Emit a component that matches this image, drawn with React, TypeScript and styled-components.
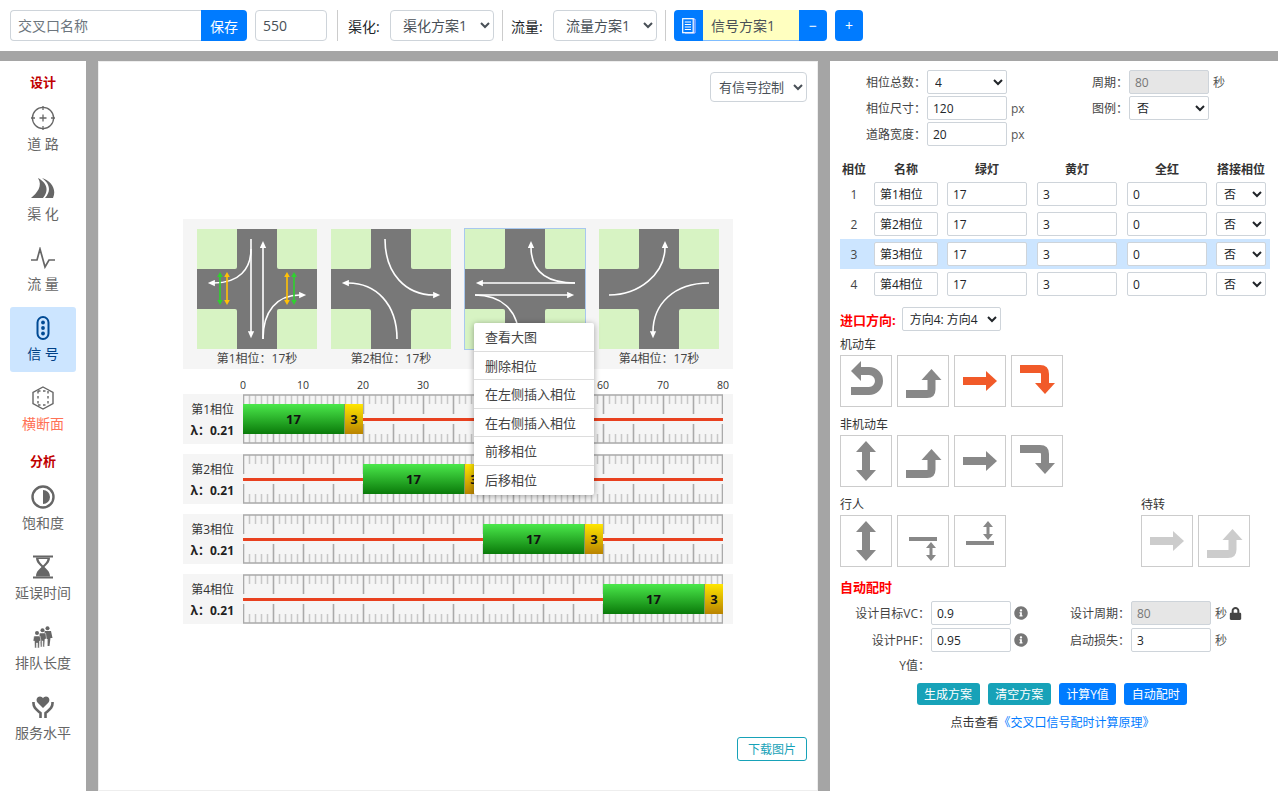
import React from "react";
import styled, { createGlobalStyle } from "styled-components";
import { FaInfoCircle, FaLock } from "react-icons/fa";

const GlobalStyle = createGlobalStyle`
    html, body {
        margin: 0;
        padding: 0;
        height: 100%;
        overflow: hidden;
    }
    * {
        box-sizing: border-box;
    }
    body {
        font-family: "Open Sans", "Noto Sans CJK SC", sans-serif;
        font-size: 14px;
        color: #212529;
    }
`;

const Page = styled.div`
    width: 1278px;
    height: 791px;
    display: flex;
    flex-direction: column;
    background: #a5a5a5;
    overflow: hidden;
`;

/* ---------- toolbar ---------- */

const Toolbar = styled.header`
    height: 51px;
    flex: none;
    background: #fff;
    display: flex;
    align-items: center;
    gap: 8px;
    padding: 0 10px;
`;

const Group = styled.div`
    display: flex;
    height: 31px;
`;

const TextInput = styled.input<{ $w: number }>`
    width: ${(p) => p.$w}px;
    height: 31px;
    border: 1px solid #ced4da;
    border-radius: 4px;
    padding: 0 7px;
    font: inherit;
    color: #495057;
    background: #fff;
    outline: none;

    &::placeholder {
        color: #6c757d;
    }
`;

const GroupedInput = styled(TextInput)`
    border-radius: 4px 0 0 4px;
    border-right: none;
`;

const PrimaryButton = styled.button<{ $w: number; $right?: boolean }>`
    width: ${(p) => p.$w}px;
    height: 31px;
    border: none;
    padding: 0;
    background: #007bff;
    color: #fff;
    font: inherit;
    border-radius: ${(p) => (p.$right ? "0 4px 4px 0" : "4px")};
    display: flex;
    align-items: center;
    justify-content: center;
`;

const PlanIcon = styled.div`
    width: 29px;
    height: 31px;
    background: #007bff;
    border-radius: 4px 0 0 4px;
    display: flex;
    align-items: center;
    justify-content: center;
`;

const PlanInput = styled.input`
    width: 96px;
    height: 31px;
    border: 1px solid #80bdff;
    border-width: 0 0 1px;
    background: #ffffc0;
    color: #495057;
    font: inherit;
    padding: 0 8px;
    outline: none;
`;

const Divider = styled.div<{ $wide?: boolean }>`
    width: 1px;
    height: 31px;
    background: #ccc;
    margin: 0 ${(p) => (p.$wide ? 2 : 0)}px;
`;

const ToolLabel = styled.label`
    width: 34px;
    white-space: nowrap;
    color: #212529;
`;

const ToolSelect = styled.select`
    width: 104px;
    height: 31px;
    border: 1px solid #ced4da;
    border-radius: 4px;
    background: #fff;
    color: #495057;
    font: inherit;
    padding: 0 8px;
`;

/* ---------- layout ---------- */

const Workspace = styled.div`
    flex: 1;
    min-height: 0;
    display: flex;
    gap: 12px;
    margin-top: 10px;
`;

/* ---------- sidebar ---------- */

const Sidebar = styled.nav`
    width: 86px;
    flex: none;
    background: #fff;
    padding: 11px 10px 0;
`;

const SideTitle = styled.div<{ $gap?: boolean }>`
    height: 20px;
    line-height: 20px;
    margin: ${(p) => (p.$gap ? 9 : 0)}px 0 5px;
    text-align: center;
    font-size: 13px;
    font-weight: 700;
    color: #c00000;
`;

const SideItem = styled.div<{ $active?: boolean; $accent?: boolean }>`
    width: 66px;
    height: 65px;
    margin-bottom: 5px;
    border-radius: 3px;
    display: flex;
    flex-direction: column;
    align-items: center;
    background: ${(p) => (p.$active ? "#cce5ff" : "transparent")};
    color: ${(p) => (p.$active ? "#004085" : p.$accent ? "#ff7256" : "#666")};
`;

const SideIcon = styled.div`
    height: 24px;
    margin-top: 9px;
    display: flex;
    align-items: center;
    justify-content: center;
    color: #666;
`;

const ActiveIcon = styled(SideIcon)`
    color: #004a94;
`;

const SideText = styled.div`
    height: 20px;
    line-height: 20px;
    margin-top: 4px;
    white-space: pre;
    font-size: 14px;
`;

/* ---------- main canvas ---------- */

const Main = styled.main`
    width: 720px;
    flex: none;
    background: #fff;
    border: 1px solid #eee;
    padding: 10px 10px 29px;
    display: flex;
    flex-direction: column;
`;

const MainTop = styled.div`
    display: flex;
    justify-content: flex-end;
`;

const ModeSelect = styled.select`
    width: 97px;
    height: 30px;
    border: 1px solid #ced4da;
    border-radius: 4px;
    background: #fff;
    color: #495057;
    font: inherit;
    font-size: 13px;
    padding: 0 4px;
`;

const Stage = styled.div`
    position: relative;
    width: 550px;
    margin: 117px auto 0;
`;

const PhaseStrip = styled.div`
    height: 150px;
    background: #f5f5f5;
    padding: 10px 14px 0;
    display: flex;
    gap: 14px;
`;

const PhaseCell = styled.div`
    width: 120px;
`;

const PhaseFrame = styled.div<{ $selected?: boolean }>`
    width: 120px;
    height: 120px;
    outline: ${(p) => (p.$selected ? "1px solid #a8c8ee" : "none")};

    svg {
        display: block;
    }
`;

const PhaseCaption = styled.div`
    height: 20px;
    line-height: 19px;
    text-align: center;
    font-size: 12px;
    color: #444;
    white-space: nowrap;
`;

const Axis = styled.div`
    width: 480px;
    height: 16px;
    margin: 8px 0 1px 60px;
    display: flex;
    justify-content: space-between;
    align-items: center;
`;

const AxisTick = styled.span`
    width: 0;
    display: flex;
    justify-content: center;
    font-size: 10.5px;
    color: #333;
`;

const TimeRow = styled.div`
    width: 550px;
    height: 50px;
    margin-bottom: 10px;
    background: #f5f5f5;
    display: flex;
`;

const TimeLabel = styled.div`
    width: 60px;
    padding: 5px 9px 0 0;
    text-align: right;
    font-size: 12px;
    color: #333;
    line-height: 21px;
`;

const Lambda = styled.div`
    font-weight: 700;
    color: #222;
    white-space: nowrap;
`;

const Track = styled.div`
    position: relative;
    width: 480px;
    height: 50px;

    svg {
        position: absolute;
        left: 0;
        top: 0;
    }
`;

const Segments = styled.div`
    position: relative;
    height: 50px;
    display: flex;
    align-items: center;
`;

const RedSeg = styled.div`
    height: 3px;
    background: #e8411f;
`;

const GreenSeg = styled.div`
    height: 30px;
    background: linear-gradient(#4be84b, #0a7a0a);
    border-right: 1px solid #7d9a62;
    display: flex;
    align-items: center;
    justify-content: center;
    font-size: 13px;
    font-weight: 700;
    color: #111;
`;

const YellowSeg = styled(GreenSeg)`
    background: linear-gradient(#ffe600, #b98300);
    border-right: none;
`;

const DownloadRow = styled.div`
    margin-top: auto;
    display: flex;
    justify-content: flex-end;
`;

const DownloadButton = styled.button`
    width: 70px;
    height: 24px;
    padding: 0;
    background: #fff;
    border: 1px solid #17a2b8;
    border-radius: 3px;
    color: #17a2b8;
    font: inherit;
    font-size: 12px;
`;

const ContextMenu = styled.ul`
    position: absolute;
    left: 291px;
    top: 104px;
    width: 120px;
    margin: 0;
    padding: 0;
    list-style: none;
    background: #fff;
    box-shadow: 0 1px 6px rgba(0, 0, 0, 0.35);
    border-radius: 2px;
`;

const MenuItem = styled.li`
    height: 28.6px;
    line-height: 28px;
    padding-left: 11px;
    font-size: 13px;
    color: #444;
    border-bottom: 1px solid #ddd;

    &:last-child {
        border-bottom: none;
    }
`;

/* ---------- right panel ---------- */

const Panel = styled.aside`
    width: 448px;
    flex: none;
    background: #fff;
    padding: 9px 8px 0 10px;
    font-size: 12px;
    color: #333;
`;

const FormGrid = styled.div<{ $label: number; $mid: number; $rowGap: number; $rows: string }>`
    display: grid;
    margin-left: -10px;
    grid-template-columns: ${(p) => p.$label}px 80px ${(p) => p.$mid}px 80px 1fr;
    grid-template-rows: ${(p) => p.$rows};
    row-gap: ${(p) => p.$rowGap}px;
    align-items: center;
`;

const FormLabel = styled.label`
    text-align: right;
    padding-right: 1px;
    white-space: nowrap;
    color: #444;
`;

const MidCell = styled.div`
    display: flex;
    align-items: center;
    justify-content: space-between;
`;

const FormUnit = styled.span`
    padding-left: 4px;
    color: #555;
    display: flex;
    align-items: center;
    gap: 2px;
`;

const InfoSlot = styled.span`
    padding-left: 3px;
    display: flex;
    color: #777;
    font-size: 14px;
`;

const FieldInput = styled.input<{ $w?: number }>`
    width: ${(p) => p.$w ?? 80}px;
    height: 24px;
    border: 1px solid #ced4da;
    border-radius: 2px;
    padding: 0 5px;
    font: inherit;
    font-size: 12px;
    color: #212529;
    background: #fff;
    outline: none;

    &:disabled {
        background: #e6e6e6;
        color: #777;
    }
`;

const FieldSelect = styled.select<{ $w?: number }>`
    width: ${(p) => p.$w ?? 80}px;
    height: 24px;
    border: 1px solid #ced4da;
    border-radius: 2px;
    padding: 0 3px;
    font: inherit;
    font-size: 12px;
    color: #212529;
    background: #fff;
`;

const TableHead = styled.div`
    display: grid;
    grid-template-columns: 34px 73px 90px 90px 89px 54px;
    height: 21px;
    margin-top: 12px;
    align-items: center;
    font-weight: 700;
    white-space: nowrap;
`;

const HeadCell = styled.div<{ $w: number }>`
    width: ${(p) => p.$w}px;
    text-align: center;
    color: #333;
`;

const TableRow = styled.div<{ $active?: boolean }>`
    display: grid;
    grid-template-columns: 34px 73px 90px 90px 89px 54px;
    width: 430px;
    height: 30px;
    align-items: center;
    background: ${(p) => (p.$active ? "#cce5ff" : "transparent")};
`;

const RowNumber = styled.div`
    width: 28px;
    text-align: center;
    color: #444;
`;

const EntryRow = styled.div`
    display: flex;
    align-items: center;
    gap: 6px;
    margin-top: 8px;
`;

const RedHeading = styled.div`
    font-size: 13px;
    font-weight: 700;
    color: #f00;
    white-space: nowrap;
`;

const GroupLabel = styled.div<{ $top: number }>`
    height: 18px;
    line-height: 20px;
    margin: ${(p) => p.$top}px 0 2px;
`;

const DirRow = styled.div`
    display: flex;
    gap: 5px;
`;

const DirButton = styled.div`
    width: 52px;
    height: 52px;
    border: 1px solid #ccc;
    background: #fff;

    svg {
        display: block;
        margin: -1px;
    }
`;

const SplitRow = styled.div`
    display: flex;
`;

const SplitCol = styled.div<{ $w: number }>`
    width: ${(p) => p.$w}px;
`;

const AutoHeading = styled(RedHeading)`
    height: 20px;
    line-height: 20px;
    margin: 10px 0 4px;
`;

const ActionRow = styled.div`
    display: flex;
    justify-content: center;
    gap: 8px;
    margin: 8px 0 0 -8px;
    padding-left: 2px;
`;

const ActionButton = styled.button<{ $teal?: boolean }>`
    height: 22px;
    padding: 0 7.5px;
    border: none;
    border-radius: 3px;
    background: ${(p) => (p.$teal ? "#17a2b8" : "#007bff")};
    color: #fff;
    font: inherit;
    font-size: 12px;
    white-space: nowrap;
`;

const HelpLine = styled.div`
    height: 20px;
    line-height: 20px;
    margin-top: 8px;
    text-align: center;
    padding-right: 5px;
    color: #333;
`;

const HelpLink = styled.a`
    color: #007bff;
`;

/* ---------- drawings ---------- */

const ROAD = "#787878";
const GRASS = "#d7f3c3";

const LaneHead: React.FC = () => (
    <defs>
        <marker id="lane-head" viewBox="0 0 8 8" refX="1" refY="4" markerWidth="8" markerHeight="7"
                markerUnits="userSpaceOnUse" orient="auto">
            <path d="M0 0.4 L8 4 L0 7.6 Z" fill="#fff"/>
        </marker>
    </defs>
);

const PedArrow: React.FC<{ x: number; color: string }> = ({ x, color }) => (
    <g fill={color}>
        <rect x={x - 0.8} y={45} width={1.6} height={29}/>
        <path d={`M${x} 43 L${x + 2.8} 48 H${x - 2.8} Z`}/>
        <path d={`M${x} 76 L${x + 2.8} 71 H${x - 2.8} Z`}/>
    </g>
);

const PhaseArt: React.FC<{ lanes: string[]; peds?: boolean }> = ({ lanes, peds }) => (
    <svg width="120" height="120" viewBox="0 0 120 120">
        <LaneHead/>
        <rect width="120" height="120" fill={ROAD}/>
        <rect x="-4" y="-4" width="44" height="44" rx="2" fill={GRASS}/>
        <rect x="80" y="-4" width="44" height="44" rx="2" fill={GRASS}/>
        <rect x="-4" y="80" width="44" height="44" rx="2" fill={GRASS}/>
        <rect x="80" y="80" width="44" height="44" rx="2" fill={GRASS}/>
        {lanes.map((d) => (
            <path key={d} d={d} fill="none" stroke="#fff" strokeWidth="1.6" markerEnd="url(#lane-head)"/>
        ))}
        {peds && (
            <>
                <PedArrow x={23} color="#2fd12f"/>
                <PedArrow x={30} color="#ffc107"/>
                <PedArrow x={90} color="#ffc107"/>
                <PedArrow x={97} color="#2fd12f"/>
            </>
        )}
    </svg>
);

const Ruler: React.FC = () => {
    const ticks = [];
    for (let i = 0; i <= 80; i++) {
        const x = Math.min(i * 6 + 0.5, 479.5);
        if (i % 5 === 0) {
            ticks.push(<path key={i} d={`M${x} 1 V20 M${x} 30 V49`} stroke="#aaa" strokeWidth="1.6"/>);
        } else {
            ticks.push(<path key={i} d={`M${x} 1 V10 M${x} 40 V49`} stroke="#c8c8c8" strokeWidth="1.5"/>);
        }
    }
    return (
        <svg width="480" height="50" viewBox="0 0 480 50">
            {ticks}
            <path d="M0 1 H480 M0 49 H480" stroke="#aaa" strokeWidth="1.6"/>
        </svg>
    );
};

const LEFT_UP = "M9 39 H30 Q34.5 39 34.5 34.5 V24";
const RIGHT = "M9 26 H33";
const RIGHT_DOWN = "M9 14 H29 Q34 14 34 19 V29";

const DirStroke: React.FC<{ d: string; head: string; color: string }> = ({ d, head, color }) => (
    <svg width="52" height="52" viewBox="0 0 52 52">
        <path d={d} fill="none" stroke={color} strokeWidth="8"/>
        <path d={head} fill={color}/>
    </svg>
);

const UTurnIcon: React.FC<{ color: string }> = ({ color }) => (
    <DirStroke d="M20 16 H29 A10 10 0 0 1 29 36 H11" head="M11 16 L21 6 V26 Z" color={color}/>
);
const LeftUpIcon: React.FC<{ color: string }> = ({ color }) => (
    <DirStroke d={LEFT_UP} head="M34.5 14 L44.5 25 H24.5 Z" color={color}/>
);
const RightIcon: React.FC<{ color: string }> = ({ color }) => (
    <DirStroke d={RIGHT} head="M43 26 L32 16 V36 Z" color={color}/>
);
const RightDownIcon: React.FC<{ color: string }> = ({ color }) => (
    <DirStroke d={RIGHT_DOWN} head="M34 39 L24 28 H44 Z" color={color}/>
);
const BothWaysIcon: React.FC = () => (
    <svg width="52" height="52" viewBox="0 0 52 52" fill="#888">
        <rect x="22" y="15" width="8" height="22"/>
        <path d="M26 6 L36 17 H16 Z M26 46 L36 35 H16 Z"/>
    </svg>
);
const CrossBelowIcon: React.FC = () => (
    <svg width="52" height="52" viewBox="0 0 52 52" fill="#888">
        <rect x="12" y="22" width="28" height="4"/>
        <rect x="32.5" y="31" width="3" height="11"/>
        <path d="M34 27 L39 33 H29 Z M34 46 L39 40 H29 Z"/>
    </svg>
);
const CrossAboveIcon: React.FC = () => (
    <svg width="52" height="52" viewBox="0 0 52 52" fill="#888">
        <rect x="12" y="26" width="28" height="4"/>
        <rect x="32.5" y="10" width="3" height="11"/>
        <path d="M34 6 L39 12 H29 Z M34 25 L39 19 H29 Z"/>
    </svg>
);

const RoadIcon = () => (
    <svg width="24" height="24" viewBox="0 0 24 24" fill="none" stroke="currentColor" strokeWidth="1.3">
        <circle cx="12" cy="12" r="10.6"/>
        <path d="M12 0 V4 M12 20 V24 M0 12 H4 M20 12 H24 M8.5 12 H15.5 M12 8.5 V15.5"/>
    </svg>
);
const ChannelIcon = () => (
    <svg width="24" height="22" viewBox="0 0 24 22" fill="currentColor">
        <path d="M0 21 C6 16 12 9 7 1 C15 5 19 13 12 21 Z"/>
        <path d="M11 1 C20 4 26 12 22 21 H14 C21 13 18 6 11 1 Z"/>
    </svg>
);
const PulseIcon = () => (
    <svg width="24" height="22" viewBox="0 0 24 22" fill="none" stroke="currentColor" strokeWidth="1.7">
        <path d="M0 13 H6 L9 2 L14 20 L18 13 H24"/>
    </svg>
);
const SignalIcon = () => (
    <svg width="14" height="24" viewBox="0 0 14 24" fill="currentColor">
        <rect x="1.5" y="1" width="11" height="22" rx="5.5" fill="none" stroke="currentColor" strokeWidth="2"/>
        <circle cx="7" cy="6.5" r="1.9"/>
        <circle cx="7" cy="12" r="1.9"/>
        <circle cx="7" cy="17.5" r="1.9"/>
    </svg>
);
const SectionIcon = () => (
    <svg width="22" height="24" viewBox="0 0 22 24" fill="none" stroke="currentColor" strokeWidth="1.4">
        <path d="M11 1 L21 6.5 V17.5 L11 23 L1 17.5 V6.5 Z"/>
        <path d="M6 5 V19 M16 5 V19 M6 5 L16 5 M6 19 L16 19" strokeDasharray="2.5 2.5"/>
    </svg>
);
const SaturationIcon = () => (
    <svg width="24" height="24" viewBox="0 0 24 24">
        <circle cx="12" cy="12" r="10.5" fill="none" stroke="currentColor" strokeWidth="2.4"/>
        <path d="M12 5 A7 7 0 0 1 12 19 Z" fill="currentColor"/>
    </svg>
);
const HourglassIcon = () => (
    <svg width="22" height="24" viewBox="0 0 22 24" fill="currentColor">
        <rect x="1" y="0.5" width="20" height="2"/>
        <rect x="1" y="21.5" width="20" height="2"/>
        <path d="M4 2.5 H18 C18 8 14 10 12.5 12 C14 14 18 16 18 21.5 H4 C4 16 8 14 9.5 12 C8 10 4 8 4 2.5 Z
                 M6.5 4 C7 7 9.5 9 11 10.5 C12.5 9 15 7 15.5 4 Z" fillRule="evenodd"/>
    </svg>
);
const QueueIcon = () => (
    <svg width="20" height="22" viewBox="0 0 20 22" fill="currentColor">
        <circle cx="14.5" cy="2.2" r="2"/>
        <path d="M11.5 5 H18 L19.5 12 H17.5 L16.5 20 H14.6 V13 H13 L11.5 11 Z"/>
        <circle cx="9.5" cy="4.2" r="2"/>
        <path d="M6.5 7 H12.5 L13.6 13 H12 L11.4 21 H9.8 V15 H9 V21 H7.5 L7 13 H5.6 Z" stroke="#fff" strokeWidth="0.5"/>
        <circle cx="4" cy="7" r="2"/>
        <path d="M1 10 H7 L8 15 H6.6 L6.2 22 H4.5 V17 H3.5 V22 H1.8 L1.4 15 H0 Z" stroke="#fff" strokeWidth="0.5"/>
    </svg>
);
const ServiceIcon = () => (
    <svg width="22" height="24" viewBox="0 0 22 24">
        <path d="M11 13 L5.5 7.5 C3.5 5 5 1.5 8 1.5 C9.3 1.5 10.4 2.2 11 3.3 C11.6 2.2 12.7 1.5 14 1.5 C17 1.5 18.5 5 16.5 7.5 Z"
              fill="currentColor"/>
        <path d="M1.5 7 C1 13 5 15 8.5 18 V23 M20.5 7 C21 13 17 15 13.5 18 V23" fill="none" stroke="currentColor"
              strokeWidth="2.6"/>
    </svg>
);
const PlanDocIcon = () => (
    <svg width="14" height="16" viewBox="0 0 14 16">
        <path d="M3 1 H13 V15 H3" fill="none" stroke="#d7c8ff" strokeWidth="1"/>
        <rect x="0.7" y="0.7" width="10.5" height="14" fill="#007bff" stroke="#fff" strokeWidth="1.2"/>
        <path d="M2.8 4 H9 M2.8 6.5 H9 M2.8 9 H9 M2.8 11.5 H9" stroke="#fff" strokeWidth="1"/>
    </svg>
);

/* ---------- data ---------- */

const PHASES = [
    {
        name: "第1相位",
        start: 0,
        peds: true,
        lanes: [
            "M54 10 V103",
            "M66 110 V18",
            "M54 20 C54 40 42 54 17 54",
            "M66 110 C66 82 80 66 103 66",
        ],
    },
    {
        name: "第2相位",
        start: 20,
        lanes: ["M54 10 C54 45 75 66 103 66", "M66 110 C66 75 45 54 17 54"],
    },
    {
        name: "第3相位",
        start: 40,
        lanes: [
            "M110 54 C85 54 66 45 66 18",
            "M110 54 H17",
            "M10 66 H103",
            "M10 66 C35 66 54 80 54 110",
        ],
    },
    {
        name: "第4相位",
        start: 60,
        lanes: ["M10 66 C40 66 66 45 66 18", "M110 54 C75 54 54 75 54 103"],
    },
];

const MENU = ["查看大图", "删除相位", "在左侧插入相位", "在右侧插入相位", "前移相位", "后移相位"];

const App: React.FC = () => {
    return (
        <Page>
            <GlobalStyle/>
            <Toolbar>
                <Group>
                    <GroupedInput $w={191} placeholder="交叉口名称"/>
                    <PrimaryButton $w={46} $right>保存</PrimaryButton>
                </Group>
                <TextInput $w={72} defaultValue="550"/>
                <Divider $wide/>
                <ToolLabel>渠化:</ToolLabel>
                <ToolSelect><option>渠化方案1</option></ToolSelect>
                <Divider/>
                <ToolLabel>流量:</ToolLabel>
                <ToolSelect><option>流量方案1</option></ToolSelect>
                <Divider/>
                <Group>
                    <PlanIcon><PlanDocIcon/></PlanIcon>
                    <PlanInput defaultValue="信号方案1"/>
                    <PrimaryButton $w={28} $right>−</PrimaryButton>
                </Group>
                <PrimaryButton $w={28}>+</PrimaryButton>
            </Toolbar>

            <Workspace>
                <Sidebar>
                    <SideTitle>设计</SideTitle>
                    <SideItem><SideIcon><RoadIcon/></SideIcon><SideText>道 路</SideText></SideItem>
                    <SideItem><SideIcon><ChannelIcon/></SideIcon><SideText>渠 化</SideText></SideItem>
                    <SideItem><SideIcon><PulseIcon/></SideIcon><SideText>流 量</SideText></SideItem>
                    <SideItem $active><ActiveIcon><SignalIcon/></ActiveIcon><SideText>信 号</SideText></SideItem>
                    <SideItem $accent><SideIcon><SectionIcon/></SideIcon><SideText>横断面</SideText></SideItem>
                    <SideTitle $gap>分析</SideTitle>
                    <SideItem><SideIcon><SaturationIcon/></SideIcon><SideText>饱和度</SideText></SideItem>
                    <SideItem><SideIcon><HourglassIcon/></SideIcon><SideText>延误时间</SideText></SideItem>
                    <SideItem><SideIcon><QueueIcon/></SideIcon><SideText>排队长度</SideText></SideItem>
                    <SideItem><SideIcon><ServiceIcon/></SideIcon><SideText>服务水平</SideText></SideItem>
                </Sidebar>

                <Main>
                    <MainTop>
                        <ModeSelect><option>有信号控制</option></ModeSelect>
                    </MainTop>
                    <Stage>
                        <PhaseStrip>
                            {PHASES.map((p, i) => (
                                <PhaseCell key={p.name}>
                                    <PhaseFrame $selected={i === 2}>
                                        <PhaseArt lanes={p.lanes} peds={p.peds}/>
                                    </PhaseFrame>
                                    {i !== 2 && <PhaseCaption>{p.name}：17秒</PhaseCaption>}
                                </PhaseCell>
                            ))}
                        </PhaseStrip>
                        <Axis>
                            {[0, 10, 20, 30, 40, 50, 60, 70, 80].map((n) => (
                                <AxisTick key={n}>{n !== 40 && n !== 50 ? n : ""}</AxisTick>
                            ))}
                        </Axis>
                        {PHASES.map((p) => (
                            <TimeRow key={p.name}>
                                <TimeLabel>
                                    {p.name}
                                    <Lambda>λ：0.21</Lambda>
                                </TimeLabel>
                                <Track>
                                    <Ruler/>
                                    <Segments>
                                        <RedSeg style={{ width: p.start * 6 }}/>
                                        <GreenSeg style={{ width: 102 }}>17</GreenSeg>
                                        <YellowSeg style={{ width: 18 }}>3</YellowSeg>
                                        <RedSeg style={{ width: 480 - p.start * 6 - 120 }}/>
                                    </Segments>
                                </Track>
                            </TimeRow>
                        ))}
                        <ContextMenu>
                            {MENU.map((m) => <MenuItem key={m}>{m}</MenuItem>)}
                        </ContextMenu>
                    </Stage>
                    <DownloadRow>
                        <DownloadButton>下载图片</DownloadButton>
                    </DownloadRow>
                </Main>

                <Panel>
                    <FormGrid $label={97} $mid={122} $rowGap={2} $rows="24px 24px 24px">
                        <FormLabel>相位总数：</FormLabel>
                        <FieldSelect defaultValue="4"><option>4</option></FieldSelect>
                        <MidCell>
                            <span/>
                            <FormLabel>周期：</FormLabel>
                        </MidCell>
                        <FieldInput disabled defaultValue="80"/>
                        <FormUnit>秒</FormUnit>
                        <FormLabel>相位尺寸：</FormLabel>
                        <FieldInput defaultValue="120"/>
                        <MidCell>
                            <FormUnit>px</FormUnit>
                            <FormLabel>图例：</FormLabel>
                        </MidCell>
                        <FieldSelect><option>否</option></FieldSelect>
                        <span/>
                        <FormLabel>道路宽度：</FormLabel>
                        <FieldInput defaultValue="20"/>
                        <FormUnit>px</FormUnit>
                    </FormGrid>

                    <TableHead>
                        <HeadCell $w={28}>相位</HeadCell>
                        <HeadCell $w={64}>名称</HeadCell>
                        <HeadCell $w={80}>绿灯</HeadCell>
                        <HeadCell $w={80}>黄灯</HeadCell>
                        <HeadCell $w={80}>全红</HeadCell>
                        <HeadCell $w={50}>搭接相位</HeadCell>
                    </TableHead>
                    {PHASES.map((p, i) => (
                        <TableRow key={p.name} $active={i === 2}>
                            <RowNumber>{i + 1}</RowNumber>
                            <FieldInput $w={64} defaultValue={p.name}/>
                            <FieldInput defaultValue="17"/>
                            <FieldInput defaultValue="3"/>
                            <FieldInput defaultValue="0"/>
                            <FieldSelect $w={50}><option>否</option></FieldSelect>
                        </TableRow>
                    ))}

                    <EntryRow>
                        <RedHeading>进口方向:</RedHeading>
                        <FieldSelect $w={99}><option>方向4: 方向4</option></FieldSelect>
                    </EntryRow>

                    <GroupLabel $top={4}>机动车</GroupLabel>
                    <DirRow>
                        <DirButton><UTurnIcon color="#888"/></DirButton>
                        <DirButton><LeftUpIcon color="#888"/></DirButton>
                        <DirButton><RightIcon color="#f15a29"/></DirButton>
                        <DirButton><RightDownIcon color="#f15a29"/></DirButton>
                    </DirRow>

                    <GroupLabel $top={8}>非机动车</GroupLabel>
                    <DirRow>
                        <DirButton><BothWaysIcon/></DirButton>
                        <DirButton><LeftUpIcon color="#888"/></DirButton>
                        <DirButton><RightIcon color="#888"/></DirButton>
                        <DirButton><RightDownIcon color="#888"/></DirButton>
                    </DirRow>

                    <SplitRow>
                        <SplitCol $w={301}>
                            <GroupLabel $top={8}>行人</GroupLabel>
                            <DirRow>
                                <DirButton><BothWaysIcon/></DirButton>
                                <DirButton><CrossBelowIcon/></DirButton>
                                <DirButton><CrossAboveIcon/></DirButton>
                            </DirRow>
                        </SplitCol>
                        <SplitCol $w={120}>
                            <GroupLabel $top={8}>待转</GroupLabel>
                            <DirRow>
                                <DirButton><RightIcon color="#ccc"/></DirButton>
                                <DirButton><LeftUpIcon color="#ccc"/></DirButton>
                            </DirRow>
                        </SplitCol>
                    </SplitRow>

                    <AutoHeading>自动配时</AutoHeading>
                    <FormGrid $label={101} $mid={120} $rowGap={3} $rows="24px 24px 20px">
                        <FormLabel>设计目标VC：</FormLabel>
                        <FieldInput defaultValue="0.9"/>
                        <MidCell>
                            <InfoSlot><FaInfoCircle/></InfoSlot>
                            <FormLabel>设计周期：</FormLabel>
                        </MidCell>
                        <FieldInput disabled defaultValue="80"/>
                        <FormUnit>秒<FaLock color="#444" size={13}/></FormUnit>
                        <FormLabel>设计PHF：</FormLabel>
                        <FieldInput defaultValue="0.95"/>
                        <MidCell>
                            <InfoSlot><FaInfoCircle/></InfoSlot>
                            <FormLabel>启动损失：</FormLabel>
                        </MidCell>
                        <FieldInput defaultValue="3"/>
                        <FormUnit>秒</FormUnit>
                        <FormLabel>Y值：</FormLabel>
                    </FormGrid>

                    <ActionRow>
                        <ActionButton $teal>生成方案</ActionButton>
                        <ActionButton $teal>清空方案</ActionButton>
                        <ActionButton>计算Y值</ActionButton>
                        <ActionButton>自动配时</ActionButton>
                    </ActionRow>
                    <HelpLine>
                        点击查看<HelpLink>《交叉口信号配时计算原理》</HelpLink>
                    </HelpLine>
                </Panel>
            </Workspace>
        </Page>
    );
};

export default App;
